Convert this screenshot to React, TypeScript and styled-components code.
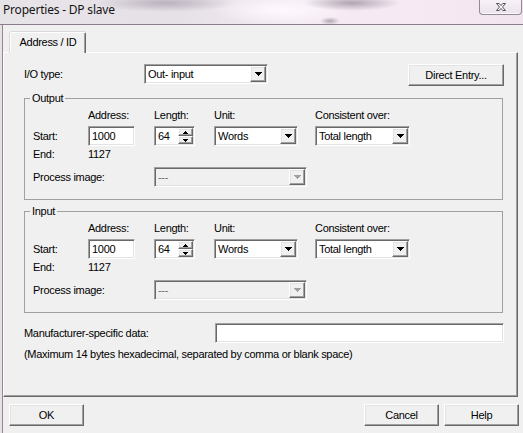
import React from 'react';
import styled, { createGlobalStyle, css } from 'styled-components';

const Global = createGlobalStyle`
  html, body { margin: 0; padding: 0; }
  body { width: 523px; height: 433px; overflow: hidden; background: #f0f0f0; }
`;

const sunken = css`
  box-sizing: border-box;
  border: 1px solid;
  border-color: #a0a0a0 #ffffff #ffffff #a0a0a0;
  box-shadow: inset 1px 1px 0 #696969, inset -1px -1px 0 #e3e3e3;
`;

const raised = css`
  box-sizing: border-box;
  border: 1px solid;
  border-color: #ffffff #696969 #696969 #ffffff;
  box-shadow: inset -1px -1px 0 #a0a0a0, inset 1px 1px 0 #e3e3e3;
  background: #f0f0f0;
`;

const Window = styled.div`
  width: 523px;
  height: 433px;
  display: flex;
  flex-direction: column;
  overflow: hidden;
  font-family: "Liberation Sans", Arial, sans-serif;
  font-size: 11px;
  letter-spacing: -0.3px;
  color: #000;
  background: #e9dfe9;
`;

const TitleBar = styled.div`
  flex: none;
  height: 25px;
  box-sizing: border-box;
  border-bottom: 1px solid #8a7e8c;
  display: flex;
  align-items: flex-start;
  justify-content: space-between;
  background:
    radial-gradient(ellipse 70px 9px at 165px 3px, rgba(150, 140, 155, 0.55), rgba(150, 140, 155, 0) 100%),
    radial-gradient(ellipse 48px 8px at 352px 3px, rgba(130, 118, 135, 0.6), rgba(130, 118, 135, 0) 100%),
    radial-gradient(ellipse 70px 14px at 280px 10px, rgba(255, 250, 255, 0.95), rgba(255, 250, 255, 0) 100%),
    radial-gradient(ellipse 10px 4px at 330px 21px, rgba(110, 100, 115, 0.5), rgba(110, 100, 115, 0) 100%),
    linear-gradient(90deg, #e7e4e8 0%, #e6e0e7 35%, #f4ebf3 55%, #f6e9f4 80%, #f1e4ef 100%);
`;

const Title = styled.span`
  font-family: "Noto Sans", "Open Sans", sans-serif;
  font-size: 12px;
  letter-spacing: -0.2px;
  line-height: 16px;
  margin: 2px 0 0 3px;
  color: #141414;
`;

const CloseButton = styled.div`
  width: 43px;
  height: 15px;
  margin-right: 1px;
  box-sizing: border-box;
  border: 1px solid rgba(95, 85, 100, 0.65);
  border-top: none;
  border-radius: 0 0 4px 4px;
  background: linear-gradient(#f7f1f7, #ece3ed);
  box-shadow: inset 0 -1px 0 rgba(255, 255, 255, 0.8);
  display: flex;
  align-items: center;
  justify-content: center;
  padding-bottom: 1px;
`;

const Body = styled.div`
  flex: 1;
  display: flex;
  min-height: 0;
`;

const Client = styled.div`
  flex: 1;
  margin-left: 2px;
  border-left: 1px solid #8c8c8c;
  background: #f0f0f0;
  display: flex;
  flex-direction: column;
`;

const TabStrip = styled.div`
  display: flex;
  padding: 7px 0 0 7px;
`;

const Tab = styled.div`
  position: relative;
  z-index: 1;
  width: 76px;
  height: 21px;
  margin-bottom: -1px;
  box-sizing: border-box;
  border: 1px solid;
  border-bottom: none;
  border-color: #ffffff #696969 transparent #ffffff;
  border-radius: 2px 2px 0 0;
  box-shadow: inset -1px 0 0 #a0a0a0, -1px 0 0 #d8d8d8, 0 -1px 0 #d8d8d8;
  background: #f0f0f0;
  text-align: center;
  line-height: 19px;
`;

const Panel = styled.div`
  width: 515px;
  height: 345px;
  box-sizing: border-box;
  border: 1px solid;
  border-color: #ffffff #696969 #696969 #ffffff;
  box-shadow: inset -1px -1px 0 #a0a0a0;
  padding: 11px 13px 0 20px;
  display: flex;
  flex-direction: column;
`;

const TopRow = styled.div`
  display: flex;
  align-items: flex-start;
  height: 22px;
`;

const Label = styled.span<{ $w?: number }>`
  display: inline-block;
  width: ${(p) => (p.$w ? `${p.$w}px` : 'auto')};
  line-height: 20px;
  white-space: nowrap;
`;

const Button = styled.button<{ $w: number }>`
  ${raised};
  width: ${(p) => p.$w}px;
  height: 22px;
  padding: 0;
  font: inherit;
  letter-spacing: inherit;
  color: #000;
  text-align: center;
`;

const PushRight = styled.div`
  margin-left: auto;
  display: flex;
`;

const Group = styled.fieldset<{ $gap: number }>`
  margin: ${(p) => p.$gap}px 0 0 0;
  width: 479px;
  min-width: 0;
  box-sizing: border-box;
  border: 1px solid #a0a0a0;
  padding: 4px 0 12px 8px;
`;

const Legend = styled.legend`
  margin-left: -3px;
  padding: 0 2px;
  line-height: 13px;
`;

const Grid = styled.div`
  display: grid;
  grid-template-columns: 55px 66px 60px 101px auto;
  grid-template-rows: 17px 20px 21px 20px;
  align-items: center;
`;

const Head = styled.span`
  align-self: start;
  line-height: 13px;
  white-space: nowrap;
`;

const Cell = styled.span<{ $top?: boolean }>`
  align-self: ${(p) => (p.$top ? 'start' : 'center')};
  padding-top: ${(p) => (p.$top ? 2 : 0)}px;
  line-height: 13px;
  white-space: nowrap;
`;

const Field = styled.div<{ $w: number; $h?: number }>`
  ${sunken};
  width: ${(p) => p.$w}px;
  height: ${(p) => p.$h ?? 20}px;
  background: #fff;
  padding: 0 3px;
  line-height: ${(p) => (p.$h ?? 20) - 2}px;
`;

const SelectBox = styled.div<{ $w: number; $disabled?: boolean }>`
  ${sunken};
  width: ${(p) => p.$w}px;
  height: 20px;
  padding: 1px;
  display: flex;
  background: ${(p) => (p.$disabled ? '#f0f0f0' : '#fff')};
  color: ${(p) => (p.$disabled ? '#6d6d6d' : '#000')};
`;

const SelectText = styled.span`
  flex: 1;
  padding-left: 2px;
  line-height: 16px;
  white-space: nowrap;
  overflow: hidden;
`;

const ArrowButton = styled.span`
  ${raised};
  width: 16px;
  height: 16px;
  display: flex;
  align-items: center;
  justify-content: center;
`;

const SpinBox = styled.div`
  ${sunken};
  width: 41px;
  height: 20px;
  padding: 1px 1px 1px 0;
  display: flex;
  background: #fff;
`;

const SpinText = styled.span`
  flex: 1;
  padding-left: 3px;
  line-height: 16px;
`;

const SpinButtons = styled.span`
  display: flex;
  flex-direction: column;
  width: 15px;
`;

const SpinButton = styled.span`
  ${raised};
  flex: 1;
  display: flex;
  align-items: center;
  justify-content: center;
`;

const ProcessSelect = styled.div`
  grid-column: 3 / 6;
  justify-self: start;
`;

const DataRow = styled.div`
  display: flex;
  align-items: center;
  margin-top: 10px;
`;

const Note = styled.div`
  margin-top: 5px;
  line-height: 13px;
  white-space: nowrap;
`;

const ButtonRow = styled.div`
  display: flex;
  padding: 7px 4px 0 6px;
  gap: 5px;
`;

const Caret = ({ color = '#000' }: { color?: string }) => (
  <svg width="7" height="4" viewBox="0 0 7 4" shapeRendering="crispEdges">
    <path d="M0 0h7v1h-1v1h-1v1h-1v1h-1v-1h-1v-1h-1v-1h-1z" fill={color} />
  </svg>
);

const SpinCaret = ({ up }: { up?: boolean }) => (
  <svg width="5" height="3" viewBox="0 0 5 3" shapeRendering="crispEdges">
    {up ? (
      <path d="M2 0h1v1h1v1h1v1h-5v-1h1v-1h1z" fill="#000" />
    ) : (
      <path d="M0 0h5v1h-1v1h-1v1h-1v-1h-1v-1h-1z" fill="#000" />
    )}
  </svg>
);

const CloseGlyph = () => (
  <svg width="12" height="10" viewBox="0 0 12 10">
    <path
      d="M1.5 1.5 L4.2 1.5 L6 3.6 L7.8 1.5 L10.5 1.5 L7.5 5 L10.5 8.5 L7.8 8.5 L6 6.4 L4.2 8.5 L1.5 8.5 L4.5 5 Z"
      fill="#fdfcfd"
      stroke="#55505a"
      strokeWidth="1"
      strokeLinejoin="round"
    />
  </svg>
);

const Select = ({ w, value, disabled }: { w: number; value: string; disabled?: boolean }) => (
  <SelectBox $w={w} $disabled={disabled}>
    <SelectText>{value}</SelectText>
    <ArrowButton>
      <Caret color={disabled ? '#a0a0a0' : '#000'} />
    </ArrowButton>
  </SelectBox>
);

const IOGroup = ({ title, gap }: { title: string; gap: number }) => (
  <Group $gap={gap}>
    <Legend>{title}</Legend>
    <Grid>
      <span />
      <Head>Address:</Head>
      <Head>Length:</Head>
      <Head>Unit:</Head>
      <Head>Consistent over:</Head>

      <Cell>Start:</Cell>
      <Field $w={47}>1000</Field>
      <SpinBox>
        <SpinText>64</SpinText>
        <SpinButtons>
          <SpinButton>
            <SpinCaret up />
          </SpinButton>
          <SpinButton>
            <SpinCaret />
          </SpinButton>
        </SpinButtons>
      </SpinBox>
      <Select w={84} value="Words" />
      <Select w={95} value="Total length" />

      <Cell $top>End:</Cell>
      <Cell $top>1127</Cell>
      <span />
      <span />
      <span />

      <Cell>Process image:</Cell>
      <span />
      <ProcessSelect>
        <Select w={153} value="---" disabled />
      </ProcessSelect>
    </Grid>
  </Group>
);

export default function App() {
  return (
    <>
      <Global />
      <Window>
        <TitleBar>
          <Title>Properties - DP slave</Title>
          <CloseButton>
            <CloseGlyph />
          </CloseButton>
        </TitleBar>
        <Body>
          <Client>
            <TabStrip>
              <Tab>Address / ID</Tab>
            </TabStrip>
            <Panel>
              <TopRow>
                <Label $w={120}>I/O type:</Label>
                <Select w={124} value="Out- input" />
                <PushRight>
                  <Button $w={96}>Direct Entry...</Button>
                </PushRight>
              </TopRow>
              <IOGroup title="Output" gap={6} />
              <IOGroup title="Input" gap={5} />
              <DataRow>
                <Label $w={191}>Manufacturer-specific data:</Label>
                <Field $w={289} />
              </DataRow>
              <Note>(Maximum 14 bytes hexadecimal, separated by comma or blank space)</Note>
            </Panel>
            <ButtonRow>
              <Button $w={75}>OK</Button>
              <PushRight>
                <Button $w={75}>Cancel</Button>
              </PushRight>
              <Button $w={75}>Help</Button>
            </ButtonRow>
          </Client>
        </Body>
      </Window>
    </>
  );
}
